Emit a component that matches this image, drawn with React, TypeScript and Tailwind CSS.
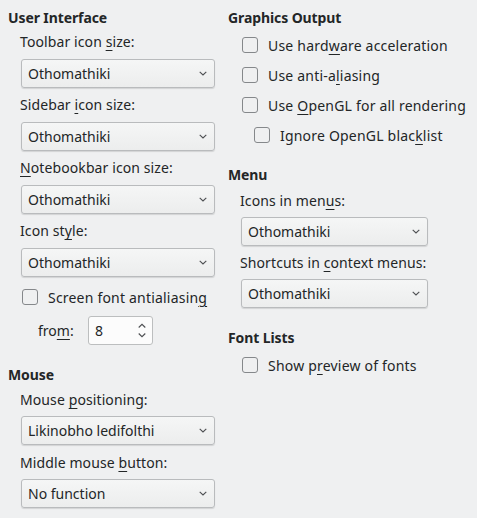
import type { ReactNode } from "react";

const U = ({ children }: { children: ReactNode }) => (
  <span className="underline decoration-1 underline-offset-[3px]">{children}</span>
);

function Chevron() {
  return (
    <svg width="8" height="5" viewBox="0 0 8 5" className="shrink-0">
      <path d="M0.7 0.8 L4 4 L7.3 0.8" fill="none" stroke="#4d4f52" strokeWidth="1.1" />
    </svg>
  );
}

function Combo({ value, className = "" }: { value: string; className?: string }) {
  return (
    <div
      className={`h-[29px] flex items-center justify-between pl-[6px] pr-[7px] rounded-[3px] border border-[#b9bbbd] bg-gradient-to-b from-[#f5f6f6] to-[#eceded] shadow-[0_1px_1px_rgba(0,0,0,0.12)] text-[#232627] ${className}`}
    >
      <span>{value}</span>
      <Chevron />
    </div>
  );
}

function Check({ children, className = "" }: { children: ReactNode; className?: string }) {
  return (
    <div className={`h-[18px] flex items-center gap-[10px] ${className}`}>
      <span className="w-4 h-4 rounded-[3px] border border-[#85888b] bg-[#eff0f1] shrink-0" />
      <span className="tracking-[0.2px]">{children}</span>
    </div>
  );
}

function Label({ children, className = "" }: { children: ReactNode; className?: string }) {
  return <div className={`h-[18px] leading-[18px] tracking-[0.1px] ${className}`}>{children}</div>;
}

function Heading({ children, className = "" }: { children: ReactNode; className?: string }) {
  return <div className={`h-[18px] leading-[18px] font-bold tracking-[-0.1px] ${className}`}>{children}</div>;
}

export default function App() {
  return (
    <div
      className="w-[477px] h-[518px] bg-[#eff0f1] text-[#232627] text-[14px] flex"
      style={{ fontFamily: '"Noto Sans", sans-serif' }}
    >
      {/* LEFT */}
      <div className="w-[220px] shrink-0 pl-[8px] flex flex-col">
        <Heading className="mt-[9px]">User Interface</Heading>
        <div className="pl-[12px] flex flex-col">
          <Label className="mt-[6px]">
            Toolbar icon <U>s</U>ize:
          </Label>
          <Combo value="Othomathiki" className="mt-[8px] ml-[1px] w-[194px]" />
          <Label className="mt-[8px]">
            Sidebar <U>i</U>con size:
          </Label>
          <Combo value="Othomathiki" className="mt-[8px] ml-[1px] w-[194px]" />
          <Label className="mt-[8px]">
            <U>N</U>otebookbar icon size:
          </Label>
          <Combo value="Othomathiki" className="mt-[8px] ml-[1px] w-[194px]" />
          <Label className="mt-[8px]">
            Icon st<U>y</U>le:
          </Label>
          <Combo value="Othomathiki" className="mt-[8px] ml-[1px] w-[194px]" />
          <Check className="mt-[11px] ml-[2px]">
            Screen font antialiasin<U>g</U>
          </Check>
          <div className="mt-[10px] h-[29px] flex items-center pl-[18px]">
            <span className="w-[50px]">
              fro<U>m</U>:
            </span>
            <div className="w-[65px] h-[29px] rounded-[3px] border border-[#bcbebf] bg-[#fcfcfc] flex items-center justify-between pl-[6px] pr-[6px]">
              <span>8</span>
              <svg width="8" height="15" viewBox="0 0 8 15">
                <path d="M0.7 4.5 L4 1.3 L7.3 4.5" fill="none" stroke="#4d4f52" strokeWidth="1.1" />
                <path d="M0.7 10.5 L4 13.7 L7.3 10.5" fill="none" stroke="#4d4f52" strokeWidth="1.1" />
              </svg>
            </div>
          </div>
        </div>
        <Heading className="mt-[21px]">Mouse</Heading>
        <div className="pl-[12px] flex flex-col">
          <Label className="mt-[7px]">
            Mouse <U>p</U>ositioning:
          </Label>
          <Combo value="Likinobho ledifolthi" className="mt-[7px] ml-[1px] w-[194px]" />
          <Label className="mt-[9px]">
            Middle mouse <U>b</U>utton:
          </Label>
          <Combo value="No function" className="mt-[7px] ml-[1px] w-[194px]" />
        </div>
      </div>

      {/* RIGHT */}
      <div className="pl-[8px] flex flex-col">
        <Heading className="mt-[9px]">Graphics Output</Heading>
        <div className="pl-[14px] flex flex-col">
          <Check className="mt-[9px]">
            Use hard<U>w</U>are acceleration
          </Check>
          <Check className="mt-[12px]">
            Use anti-a<U>l</U>iasing
          </Check>
          <Check className="mt-[12px]">
            Use <U>O</U>penGL for all rendering
          </Check>
          <Check className="mt-[12px] ml-[12px]">
            Ignore OpenGL blac<U>k</U>list
          </Check>
        </div>
        <Heading className="mt-[22px]">Menu</Heading>
        <div className="pl-[12px] flex flex-col">
          <Label className="mt-[8px]">
            Icons in men<U>u</U>s:
          </Label>
          <Combo value="Othomathiki" className="mt-[7px] ml-[1px] w-[187px]" />
          <Label className="mt-[8px]">
            Shortcuts in <U>c</U>ontext menus:
          </Label>
          <Combo value="Othomathiki" className="mt-[7px] ml-[1px] w-[187px]" />
        </div>
        <Heading className="mt-[21px]">Font Lists</Heading>
        <div className="pl-[14px] flex flex-col">
          <Check className="mt-[9px]">
            Show p<U>r</U>eview of fonts
          </Check>
        </div>
      </div>
    </div>
  );
}
